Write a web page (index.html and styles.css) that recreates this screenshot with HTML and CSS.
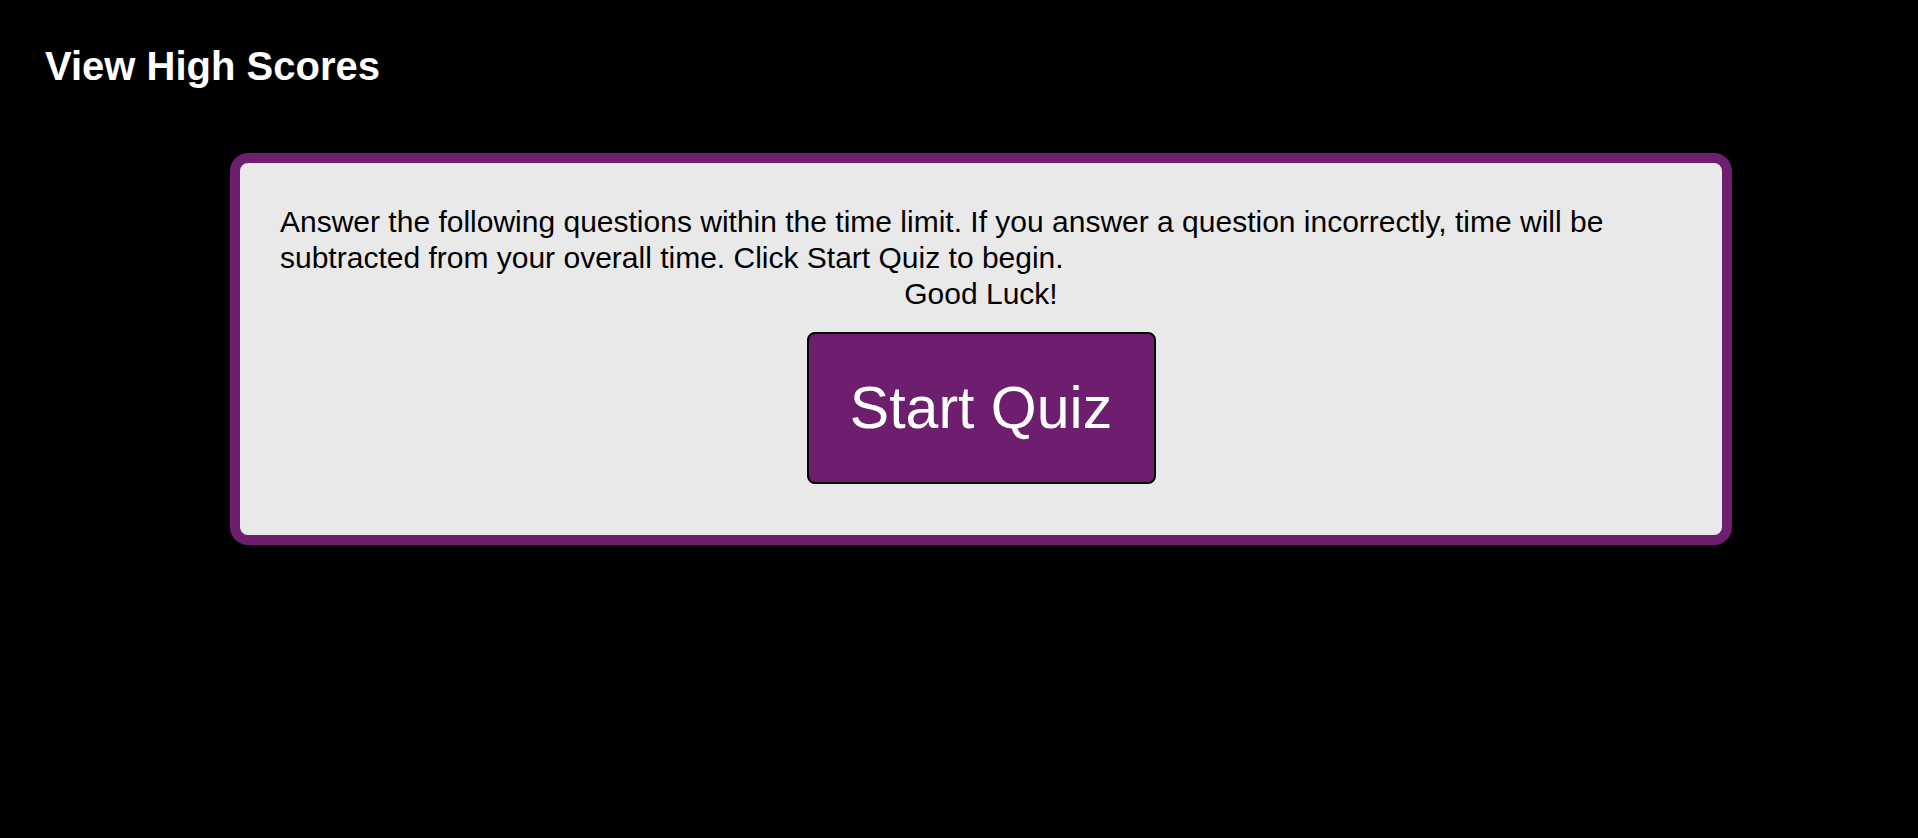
FILE: index.html
```html
<!DOCTYPE html>
<html lang="en">
<head>
<meta charset="utf-8">
<title>Code Quiz</title>
<link rel="stylesheet" href="styles.css">
</head>
<body>
<header class="topbar">
  <a class="high-scores" href="#">View High Scores</a>
</header>
<main class="card">
  <p class="intro">Answer the following questions within the time limit. If you answer a question incorrectly, time will be subtracted from your overall time. Click Start Quiz to begin.</p>
  <p class="luck">Good Luck!</p>
  <button class="start-btn" type="button">Start Quiz</button>
</main>
</body>
</html>
```
FILE: styles.css
```css
html, body {
  margin: 0;
  padding: 0;
  background: #000;
  font-family: "Liberation Sans", Arial, Helvetica, sans-serif;
}

.topbar {
  padding: 43px 45px 0;
  height: 110px;
  box-sizing: border-box;
}

.high-scores {
  color: #fff;
  font-weight: bold;
  font-size: 40px;
  text-decoration: none;
  line-height: 46px;
}

.card {
  box-sizing: border-box;
  width: 1502px;
  margin: 43px 0 0 230px;
  background: #e9e9e9;
  border: 10px solid #6e1e6e;
  border-radius: 18px;
  padding: 41px 40px 51px;
  display: flex;
  flex-direction: column;
  align-items: center;
  color: #000;
}

.intro, .luck {
  margin: 0;
  font-size: 30px;
  line-height: 36px;
  align-self: stretch;
}

.luck {
  text-align: center;
}

.start-btn {
  margin-top: 20px;
  background: #6e1e6e;
  color: #fff;
  font-family: "Liberation Sans", Arial, Helvetica, sans-serif;
  font-size: 59px;
  line-height: 69px;
  padding: 0;
  white-space: nowrap;
  border: 2px solid #000;
  border-radius: 8px;
  width: 349px;
  height: 152px;
  box-sizing: border-box;
  cursor: pointer;
}
```
